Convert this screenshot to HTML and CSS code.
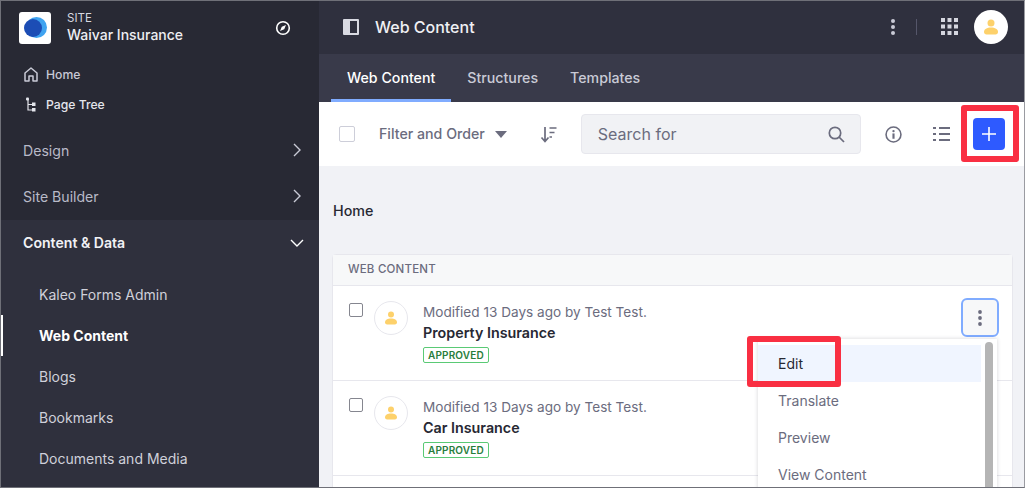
FILE: index.html
```html
<!DOCTYPE html>
<html lang="en">
<head>
  <meta charset="UTF-8">
  <title>Web Content</title>
  <link rel="stylesheet" href="styles.css">
</head>
<body>
  <div class="frame">
    <aside class="sidebar">
      <div class="side-top">
        <div class="site">
          <div class="site-logo">
            <svg width="24" height="24" viewBox="0 0 24 24"><circle cx="13.5" cy="11.5" r="10.5" fill="#3fa3f0"/><circle cx="10" cy="12" r="9" fill="#1c4db5"/></svg>
          </div>
          <div class="site-name">
            <span class="site-label">SITE</span>
            <span class="site-title">Waivar Insurance</span>
          </div>
          <svg class="compass" width="16" height="16" viewBox="0 0 16 16" fill="none"><circle cx="8" cy="8" r="6.3" stroke="#fff" stroke-width="1.6"/><path d="M11 5 9.2 9.2 5 11l1.8-4.2z" fill="#fff"/></svg>
        </div>
        <a class="quick">
          <svg width="14" height="15" viewBox="0 0 14 15" fill="none"><path d="M1 14V6l6-5 6 5v8H9V9H5v5z" stroke="#c9cad6" stroke-width="1.5" stroke-linejoin="round"/></svg>
          Home
        </a>
        <a class="quick">
          <svg width="14" height="15" viewBox="0 0 14 15" fill="none"><path d="M4 3v10h5M4 7.5h5" stroke="#e4e5ec" stroke-width="1.2"/><rect x="2" y="0.5" width="3" height="3" rx="1" fill="#e4e5ec"/><rect x="8" y="5.5" width="3.500" height="3.500" fill="#e4e5ec"/><rect x="8" y="11" width="3.500" height="3.500" fill="#e4e5ec"/></svg>
          <span class="quick-strong">Page Tree</span>
        </a>
        <a class="section">Design
          <svg width="10" height="14" viewBox="0 0 10 14" fill="none"><path d="m2 1 6 6-6 6" stroke="#c9cad6" stroke-width="1.4"/></svg>
        </a>
        <a class="section">Site Builder
          <svg width="10" height="14" viewBox="0 0 10 14" fill="none"><path d="m2 1 6 6-6 6" stroke="#c9cad6" stroke-width="1.4"/></svg>
        </a>
      </div>
      <div class="side-open">
        <a class="section section-open">Content &amp; Data
          <svg width="14" height="10" viewBox="0 0 14 10" fill="none"><path d="m1 2 6 6 6-6" stroke="#fff" stroke-width="1.4"/></svg>
        </a>
        <ul class="subnav">
          <li>Kaleo Forms Admin</li>
          <li class="active">Web Content</li>
          <li>Blogs</li>
          <li>Bookmarks</li>
          <li>Documents and Media</li>
        </ul>
      </div>
    </aside>

    <main class="main">
      <header class="topbar">
        <svg width="16" height="16" viewBox="0 0 16 16"><rect width="16" height="16" rx="1" fill="#d9dae2"/><rect x="7" y="2" width="7" height="12" fill="#2f303e"/></svg>
        <span class="page-title">Web Content</span>
        <div class="topbar-right">
          <svg width="4" height="16" viewBox="0 0 4 16" fill="#c9cad6"><circle cx="2" cy="2" r="2"/><circle cx="2" cy="8" r="2"/><circle cx="2" cy="14" r="2"/></svg>
          <span class="divider"></span>
          <svg class="apps" width="17" height="17" viewBox="0 0 17 17" fill="#d5d6df"><rect width="4" height="4"/><rect x="6.500" width="4" height="4"/><rect x="13" width="4" height="4"/><rect y="6.500" width="4" height="4"/><rect x="6.500" y="6.500" width="4" height="4"/><rect x="13" y="6.500" width="4" height="4"/><rect y="13" width="4" height="4"/><rect x="6.500" y="13" width="4" height="4"/><rect x="13" y="13" width="4" height="4"/></svg>
          <span class="avatar avatar-top">
            <svg width="14" height="16" viewBox="0 0 14 16" fill="#fdd16b"><circle cx="7" cy="4" r="3.500"/><path d="M0 13c0-3 3-4.500 7-4.500s7 1.500 7 4.500c0 1.500-1 2.500-2.500 2.500h-9C1 15.500 0 14.500 0 13z"/></svg>
          </span>
        </div>
      </header>

      <nav class="tabs">
        <a class="tab tab-active">Web Content</a>
        <a class="tab">Structures</a>
        <a class="tab">Templates</a>
      </nav>

      <div class="toolbar">
        <span class="check check-tool"></span>
        <span class="filter">Filter and Order</span>
        <svg class="caret" width="12" height="7" viewBox="0 0 12 7" fill="#6b6c7e"><path d="M0 0h12L6 7z"/></svg>
        <svg class="sort" width="17" height="17" viewBox="0 0 17 17" fill="none" stroke="#6b6c7e" stroke-width="1.700"><path d="M5 1v14M1.500 11.500 5 15.500l3.500-4M9.500 2h7M9.500 6.500h5M9.500 11h2.500"/></svg>
        <div class="search">
          <span>Search for</span>
          <svg width="17" height="17" viewBox="0 0 17 17" fill="none" stroke="#6b6c7e" stroke-width="1.700"><circle cx="7" cy="7" r="5.700"/><path d="m11 11 5 5"/></svg>
        </div>
        <svg class="info" width="17" height="17" viewBox="0 0 16 16" fill="none"><circle cx="8" cy="8" r="7" stroke="#6b6c7e" stroke-width="1.500"/><rect x="7" y="7" width="2" height="5" fill="#6b6c7e"/><circle cx="8" cy="4.800" r="1.100" fill="#6b6c7e"/></svg>
        <svg class="list" width="17" height="16" viewBox="0 0 17 16" fill="#6b6c7e"><rect y="1" width="3" height="2"/><rect x="6" y="1" width="11" height="2"/><rect y="7" width="3" height="2"/><rect x="6" y="7" width="11" height="2"/><rect y="13" width="3" height="2"/><rect x="6" y="13" width="11" height="2"/></svg>
        <button class="add">
          <svg width="16" height="16" viewBox="0 0 16 16" stroke="#fff" stroke-width="1.600"><path d="M8 1v14M1 8h14"/></svg>
        </button>
      </div>

      <div class="content">
        <div class="crumb">Home</div>
        <section class="card">
          <div class="card-head">WEB CONTENT</div>
          <div class="row">
            <span class="check"></span>
            <span class="avatar">
              <svg width="12" height="14" viewBox="0 0 14 16" fill="#fdd16b"><circle cx="7" cy="4" r="3.500"/><path d="M0 13c0-3 3-4.500 7-4.500s7 1.500 7 4.500c0 1.500-1 2.500-2.500 2.500h-9C1 15.500 0 14.500 0 13z"/></svg>
            </span>
            <div class="row-text">
              <span class="meta">Modified 13 Days ago by Test Test.</span>
              <span class="name">Property Insurance</span>
              <span class="badge">APPROVED</span>
            </div>
            <button class="kebab">
              <svg width="4" height="16" viewBox="0 0 4 16" fill="#6b6c7e"><circle cx="2" cy="2" r="1.900"/><circle cx="2" cy="8" r="1.900"/><circle cx="2" cy="14" r="1.900"/></svg>
            </button>
          </div>
          <div class="row">
            <span class="check"></span>
            <span class="avatar">
              <svg width="12" height="14" viewBox="0 0 14 16" fill="#fdd16b"><circle cx="7" cy="4" r="3.500"/><path d="M0 13c0-3 3-4.500 7-4.500s7 1.500 7 4.500c0 1.500-1 2.500-2.500 2.500h-9C1 15.500 0 14.500 0 13z"/></svg>
            </span>
            <div class="row-text">
              <span class="meta">Modified 13 Days ago by Test Test.</span>
              <span class="name">Car Insurance</span>
              <span class="badge">APPROVED</span>
            </div>
          </div>
          <div class="row"></div>
        </section>
      </div>
    </main>

    <div class="menu">
      <ul class="menu-list">
        <li class="menu-hover">Edit</li>
        <li>Translate</li>
        <li>Preview</li>
        <li>View Content</li>
      </ul>
      <span class="scroll-thumb"></span>
    </div>
    <span class="mark mark-add"></span>
    <span class="mark mark-edit"></span>
  </div>
</body>
</html>
```

FILE: styles.css
```css
* {
  box-sizing: border-box;
}
html, body {
  margin: 0;
  height: 488px;
  overflow: hidden;
}
body {
  font-family: Inter, "Liberation Sans", sans-serif;
  background-color: #f1f2f6;
}
.frame {
  position: relative;
  display: flex;
  width: 1025px;
  height: 488px;
  overflow: hidden;
  border: 1px solid #6f7078;
  border-right-color: #9a9ba1;
}

/* sidebar */
.sidebar {
  display: flex;
  flex-direction: column;
  flex: 0 0 318px;
  background-color: #2f303d;
}
.side-top {
  height: 219px;
  background-color: #282934;
}
.site {
  display: flex;
  align-items: center;
  height: 53px;
  padding: 0 28px 0 18px;
}
.site-logo {
  display: flex;
  align-items: center;
  justify-content: center;
  width: 32px;
  height: 32px;
  background-color: #fff;
  border-radius: 3px;
}
.site-name {
  display: flex;
  flex-direction: column;
  margin-left: 16px;
  color: #fff;
}
.site-label {
  font-size: 11.5px;
  line-height: 14px;
  color: #d7d8e0;
}
.site-title {
  font-size: 14px;
  font-weight: 500;
  line-height: 19px;
  color: #eeeef2;
}
.compass {
  margin-left: auto;
}
.quick {
  display: flex;
  align-items: center;
  gap: 8px;
  height: 30px;
  padding-left: 23px;
  font-size: 12.2px;
  font-weight: 500;
  color: #c9cad6;
}
.quick-strong {
  color: #e4e5ec;
}
.quick:first-of-type {
  margin-top: 5px;
}
.section {
  display: flex;
  align-items: center;
  justify-content: space-between;
  height: 46px;
  padding: 0 17px 0 22px;
  font-size: 14.1px;
  color: #b9bac8;
}
.site + .quick + .quick + .section {
  margin-top: 8px;
}
.section-open {
  height: 45px;
  font-weight: 600;
  color: #f2f2f6;
  padding-right: 15px;
}
.subnav {
  list-style: none;
  margin: 0;
  padding: 9px 0 0;
}
.subnav li {
  height: 41px;
  line-height: 41px;
  padding-left: 38px;
  font-size: 14px;
  color: #cfd0da;
}
.subnav .active {
  font-weight: 700;
  color: #fff;
  box-shadow: inset 2px 0 0 #fff;
}

/* top of main */
.main {
  flex: 1;
  min-width: 0;
  display: flex;
  flex-direction: column;
  background-color: #f1f2f6;
}
.topbar {
  display: flex;
  align-items: center;
  flex: 0 0 53px;
  padding: 0 16px 2px 24px;
  background-color: #2f303e;
}
.page-title {
  margin-left: 16px;
  font-size: 16px;
  font-weight: 500;
  color: #f0f0f4;
}
.topbar-right {
  display: flex;
  align-items: center;
  margin-left: auto;
}
.divider {
  width: 1px;
  height: 16px;
  margin-left: 21px;
  background-color: #55566a;
}
.apps {
  margin-left: 24px;
}
.avatar {
  display: flex;
  align-items: center;
  justify-content: center;
  flex: none;
  width: 34px;
  height: 34px;
  background-color: #fff;
  border: 1px solid #e7e7ed;
  border-radius: 50%;
}
.avatar-top {
  margin-left: 16px;
  border: 0;
}
.tabs {
  display: flex;
  flex: 0 0 48px;
  gap: 0;
  padding-left: 12px;
  background-color: #393a4a;
}
.tab {
  display: flex;
  align-items: center;
  padding: 2px 16px 0;
  font-size: 14.2px;
  font-weight: 500;
  color: #c9cad6;
  border-bottom: 3px solid transparent;
}
.tab-active {
  color: #fff;
  border-bottom-color: #80acff;
}

/* toolbar */
.toolbar {
  display: flex;
  align-items: center;
  flex: 0 0 64px;
  padding: 0 8px 0 20px;
  background-color: #fff;
}
.check {
  display: block;
  flex: none;
  width: 14px;
  height: 14px;
  background-color: #fff;
  border: 1px solid #85868f;
  border-radius: 2px;
}
.check-tool {
  width: 16px;
  height: 16px;
  border-color: #cdced9;
}
.filter {
  margin: 0 0 2px 24px;
  font-size: 14.2px;
  font-weight: 500;
  color: #6b6c7e;
}
.caret {
  margin-left: 10px;
}
.sort {
  margin-left: 33px;
}
.search {
  display: flex;
  align-items: center;
  justify-content: space-between;
  width: 280px;
  height: 40px;
  margin-left: 24px;
  padding: 0 15px 0 16px;
  font-size: 16px;
  color: #6b6c7e;
  background-color: #f1f2f5;
  border: 1px solid #e7e7ed;
  border-radius: 4px;
}
.info {
  margin-left: 24px;
}
.list {
  margin-left: 31px;
}
.add {
  display: flex;
  align-items: center;
  justify-content: center;
  width: 32px;
  height: 32px;
  margin-left: 23px;
  padding: 0;
  background-color: #2e5aff;
  border: none;
  border-radius: 4px;
}

/* list */
.content {
  flex: 1;
  padding: 0 11px 0 13px;
}
.crumb {
  height: 88px;
  padding: 36px 0 0 1px;
  font-size: 14.3px;
  line-height: 18px;
  font-weight: 500;
  color: #272833;
}
.card {
  background-color: #fff;
  border: 1px solid #e7e7ed;
  border-radius: 4px 4px 0 0;
}
.card-head {
  height: 31px;
  padding-left: 15px;
  font-size: 11.500px;
  line-height: 29px;
  font-weight: 500;
  letter-spacing: 0.2px;
  color: #6b6c7e;
  background-color: #f7f8f9;
  border-bottom: 1px solid #e7e7ed;
}
.row {
  position: relative;
  display: flex;
  align-items: flex-start;
  height: 95px;
  padding: 15px 13px 0 16px;
  border-bottom: 1px solid #e7e7ed;
}
.row .check {
  margin-top: 2px;
}
.row .avatar {
  margin-left: 11px;
}
.row-text {
  display: flex;
  flex-direction: column;
  align-items: flex-start;
  margin: 1px 0 0 15px;
}
.meta {
  font-size: 13.600px;
  line-height: 20px;
  color: #6b6c7e;
}
.name {
  font-size: 14.300px;
  line-height: 21px;
  font-weight: 600;
  color: #272833;
}
.badge {
  margin-top: 4px;
  padding: 0 4px;
  font-size: 10px;
  line-height: 14px;
  font-weight: 600;
  letter-spacing: 0.15px;
  color: #287d3c;
  border: 1px solid #5aca75;
  border-radius: 2px;
}
.kebab {
  display: flex;
  align-items: center;
  justify-content: center;
  width: 38px;
  height: 39px;
  margin-top: -3px;
  margin-left: auto;
  padding: 0;
  background-color: #f7f8f9;
  border: 2px solid #80acff;
  border-radius: 6px;
}

/* dropdown and red call-outs lie over the page */
.menu {
  position: absolute;
  left: 757px;
  top: 338px;
  width: 239px;
  height: 160px;
  padding-top: 6px;
  background-color: #fff;
  box-shadow: 0 0 4px rgba(39, 40, 51, 0.2);
}
.menu-list {
  list-style: none;
  margin: 0;
  padding: 0;
}
.menu-list li {
  height: 37px;
  line-height: 37px;
  padding-left: 20px;
  width: 223px;
  font-size: 14px;
  color: #6b6c7e;
}
.menu-list .menu-hover {
  color: #272833;
  background-color: #f0f5ff;
}
.scroll-thumb {
  position: absolute;
  top: 3px;
  right: 4px;
  width: 8px;
  height: 160px;
  background-color: #b5b5b5;
  border-radius: 4px;
}
.mark {
  position: absolute;
  border: 6px solid #f92f42;
  border-radius: 3px;
}
.mark-add {
  left: 960px;
  top: 104px;
  width: 58px;
  height: 57px;
}
.mark-edit {
  left: 746px;
  top: 335px;
  width: 94px;
  height: 51px;
}
```
